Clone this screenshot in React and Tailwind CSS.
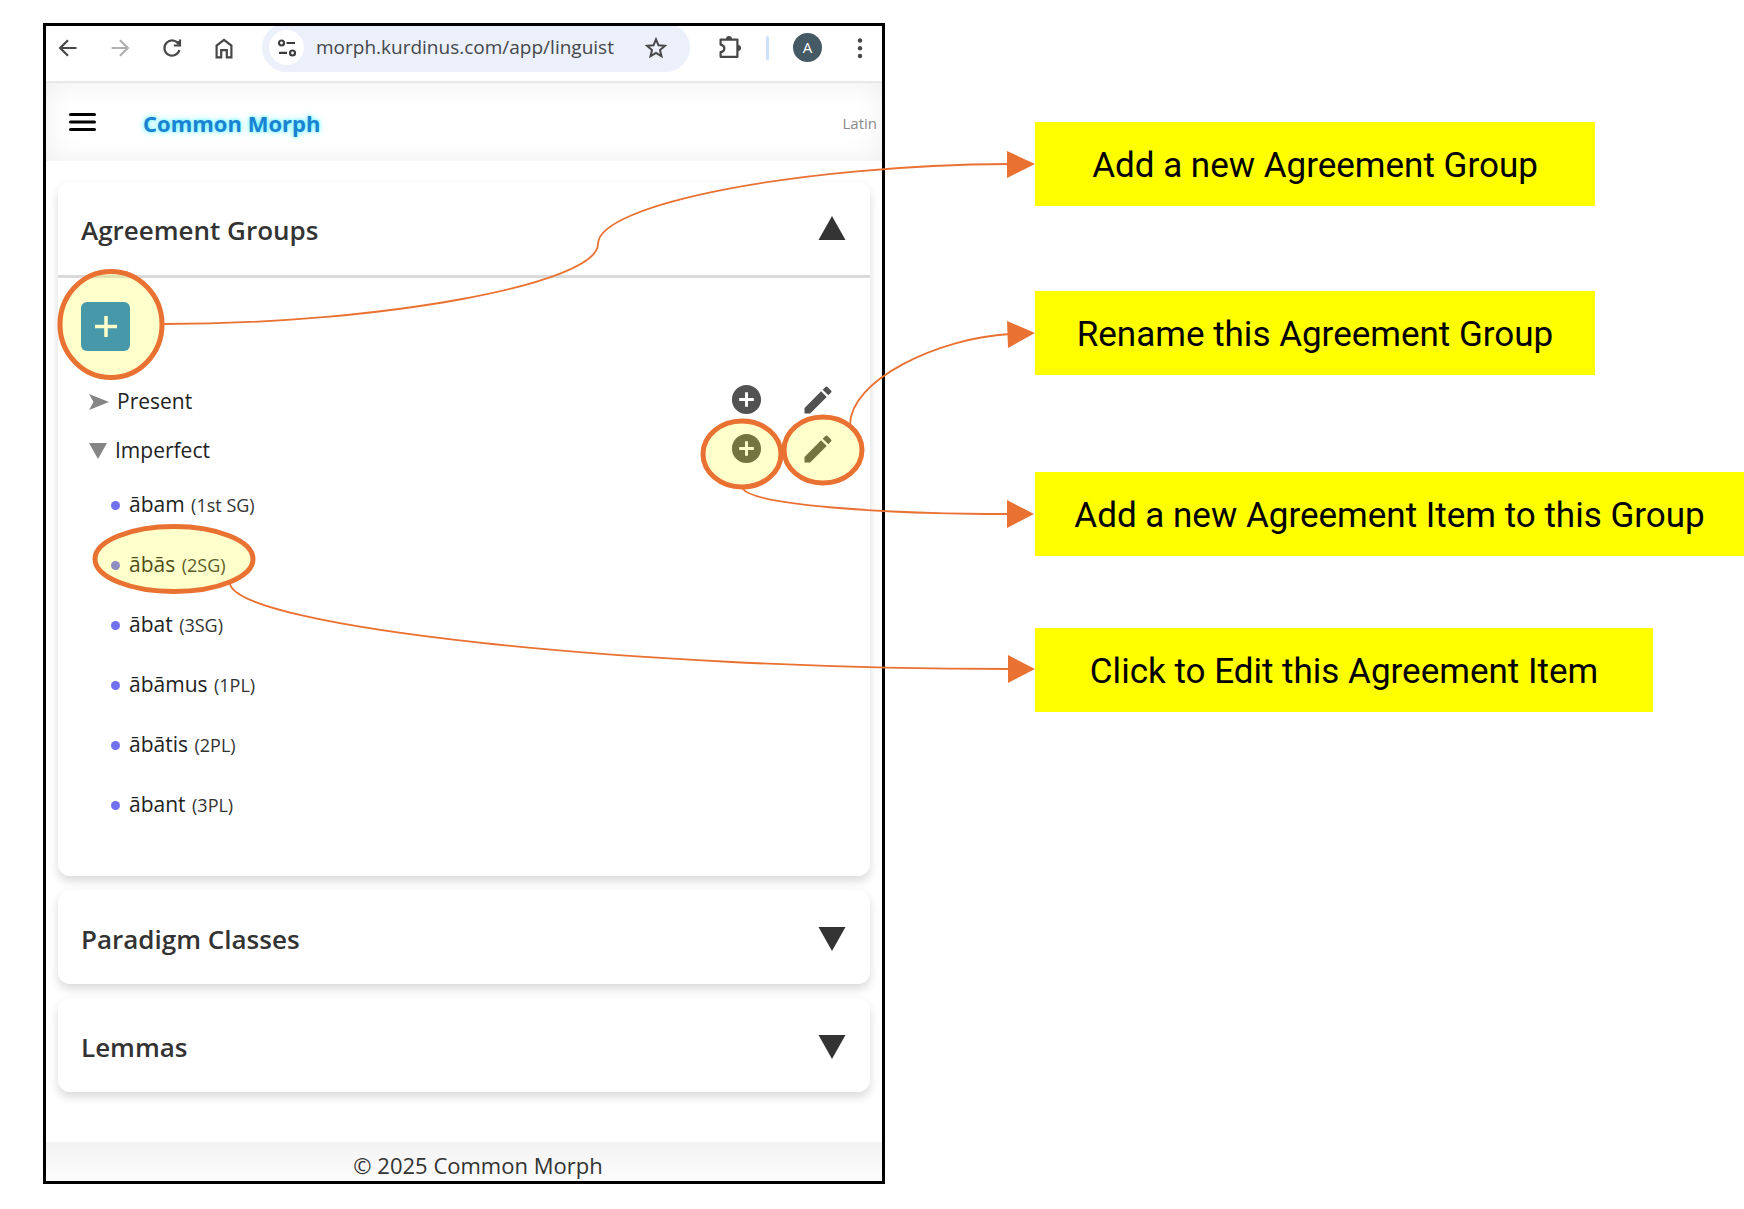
import React from "react";
import { MdAddCircle, MdEdit } from "react-icons/md";

const ITEMS = [
  ["ābam", "(1st SG)"],
  ["ābās", "(2SG)"],
  ["ābat", "(3SG)"],
  ["ābāmus", "(1PL)"],
  ["ābātis", "(2PL)"],
  ["ābant", "(3PL)"],
];

function NavButton({ label, className = "text-[#474747]", children }) {
  return (
    <button aria-label={label} className={`flex size-6 shrink-0 items-center justify-center ${className}`}>
      <svg viewBox="0 0 24 24" className="size-6" fill="none" stroke="currentColor" strokeWidth="2.2">
        {children}
      </svg>
    </button>
  );
}

function BrowserBar() {
  return (
    <div className="overflow-hidden border-b-2 border-[#e8e8e8] bg-white pb-[9px]">
      <div className="-mt-[3px] flex h-[49px] items-center pr-[10px] pl-[10px]">
        <div className="flex gap-7">
          <NavButton label="Back">
            <path d="M20.5 12H5M12 4.2 4.2 12l7.8 7.8" />
          </NavButton>
          <NavButton label="Forward" className="text-[#b0b0b0]">
            <path d="M3.5 12H19M12 4.2l7.8 7.8-7.8 7.8" />
          </NavButton>
          <NavButton label="Reload">
            <path d="M18.6 8.2A7.6 7.6 0 1 0 19.4 14" />
            <path d="M20 3.5v6h-6.2" />
            <path d="M18.6 8.5V5" />
          </NavButton>
          <NavButton label="Home">
            <path d="M4.6 21.4V9.6L12 3.8l7.4 5.8v11.8h-4.6v-7.2H9.2v7.2z" />
          </NavButton>
        </div>
        <div className="ml-[26px] flex h-full flex-1 items-center rounded-full bg-[#ebf0fa] pr-[22px] pl-[7px]">
          <button aria-label="Site information" className="flex size-[35px] shrink-0 items-center justify-center rounded-full bg-white text-[#3c3c3c]">
            <svg viewBox="0 0 24 24" className="size-6" fill="none" stroke="currentColor" strokeWidth="2.2">
              <circle cx="6.5" cy="7" r="2.5" />
              <path d="M11.5 7H20M4 16.8H12" />
              <circle cx="17.5" cy="17" r="2.5" />
            </svg>
          </button>
          <input
            aria-label="Address"
            defaultValue="morph.kurdinus.com/app/linguist"
            className="ml-3 min-w-0 flex-1 bg-transparent text-[19px] text-[#45474c] outline-none"
          />
          <button aria-label="Bookmark" className="text-[#474747]">
            <svg viewBox="0 0 24 24" className="size-6" fill="none" stroke="currentColor" strokeWidth="2">
              <path d="m12 3.4 2.5 5.9 6.400.5-4.900 4.200 1.500 6.200L12 16.900l-5.500 3.300L8 14 3.100 9.800l6.400-.5z" />
            </svg>
          </button>
        </div>
        <button aria-label="Extensions" className="ml-7 text-[#474747]">
          <svg viewBox="0 0 24 24" className="size-6" fill="none" stroke="currentColor" strokeWidth="2.2">
            <path d="M2.600 3.600h16.800v17.200H2.600v-4.600c5-1 5-6.600 0-7.600z" strokeLinejoin="round" />
            <path d="M8 3a3 3 0 0 1 6 0zM20 9a3 3 0 0 1 0 6z" fill="currentColor" stroke="none" />
          </svg>
        </button>
        <span className="ml-6 h-6 w-[3px] rounded bg-[#cbdffc]" />
        <button aria-label="Profile" className="ml-6 flex size-[29px] items-center justify-center rounded-full bg-[#455a64] text-[15px] font-medium text-white">
          A
        </button>
        <button aria-label="Browser menu" className="ml-[26px] text-[#474747]">
          <svg viewBox="0 0 24 24" className="size-6" fill="currentColor">
            <circle cx="12" cy="4.5" r="2.2" />
            <circle cx="12" cy="12.2" r="2.2" />
            <circle cx="12" cy="20" r="2.2" />
          </svg>
        </button>
      </div>
    </div>
  );
}

function Section({ title, open = false, children }) {
  return (
    <section className="rounded-xl bg-white shadow-[0_5px_10px_rgba(0,0,0,0.15)]">
      <h2>
        <button
          aria-expanded={open}
          className={`flex w-full items-center justify-between pt-1 pr-6 pl-[23px] text-[26px] font-semibold text-[#333] ${open ? "h-24 border-b-[3px] border-[#dadada]" : "h-[94px]"}`}
        >
          {title}
          <svg viewBox="0 0 28 24" className={`h-6 w-7 ${open ? "mb-1.5" : ""}`} fill="#333">
            {open ? <path d="M14 0 27.500 24H.5z" /> : <path d="M14 24 27.500 0H.5z" />}
          </svg>
        </button>
      </h2>
      {children}
    </section>
  );
}

function GroupRow({ name, open }) {
  return (
    <div className="flex h-[49px] items-center pr-[34px] pl-[31px]">
      <button aria-expanded={open} className="flex items-center gap-2 pt-1 text-[21px] text-[#222]">
        {open ? (
          <svg viewBox="0 0 18 16" className="h-4 w-[18px]" fill="#858585">
            <path d="M0 0h18L9 16z" />
          </svg>
        ) : (
          <svg viewBox="0 0 20 16" className="h-4 w-5" fill="#858585">
            <path d="M0 0 20 8 0 16 4.500 8z" />
          </svg>
        )}
        {name}
      </button>
      <button aria-label={`Add item to ${name}`} className="ml-auto text-[#525252]">
        <MdAddCircle size={35} />
      </button>
      <button aria-label={`Rename ${name}`} className="ml-9 text-[#525252]">
        <MdEdit size={36} />
      </button>
    </div>
  );
}

function AppWindow() {
  return (
    <div className="w-full max-w-[842px] shrink-0 border-[3px] border-black bg-white font-['Open_Sans','Noto_Sans',sans-serif]">
      <BrowserBar />
      <header className="flex h-[78px] items-center pr-[5px] pl-[23px] shadow-[inset_0_0_28px_rgba(0,0,0,0.07)]">
        <button aria-label="Menu" className="text-black">
          <svg viewBox="0 0 27 18" className="h-[18px] w-[27px]" fill="none" stroke="currentColor" strokeWidth="3" strokeLinecap="round">
            <path d="M1.500 1.500h24M1.500 9h24M1.500 16.500h24" />
          </svg>
        </button>
        <a href="#home" className="ml-[47px] pt-0.5 text-[22px] font-bold text-[#1b82d2] [text-shadow:0_0_6px_#5ef4ff,0_0_3px_#8ff8ff]">
          Common Morph
        </a>
        <span className="ml-auto pt-0.5 text-[15px] text-[#8b8b8b]">Latin</span>
      </header>
      <main className="flex flex-col gap-[14px] px-3 pt-[21px] pb-[50px]">
        <Section title="Agreement Groups" open>
          <div className="pt-6 pb-[41px]">
            <button aria-label="Add group" className="mb-6 ml-[23px] flex size-[49px] items-center justify-center rounded-md bg-[#197fd3] text-white">
              <svg viewBox="0 0 22 22" className="size-[22px]" stroke="currentColor" strokeWidth="3.5">
                <path d="M11 0v21M0 10.500h22" />
              </svg>
            </button>
            <GroupRow name="Present" open={false} />
            <GroupRow name="Imperfect" open />
            <ul className="pt-0.5">
              {ITEMS.map(([form, tag]) => (
                <li key={form} className="flex h-[60px] items-center pl-[53px]">
                  <span className="mr-[9px] size-[9px] rounded-full bg-[#7171f1]" />
                  <button className="text-[21px] text-[#222]">
                    {form} <span className="ml-px text-[18px] text-[#333]">{tag}</span>
                  </button>
                </li>
              ))}
            </ul>
          </div>
        </Section>
        <Section title="Paradigm Classes" />
        <Section title="Lemmas" />
      </main>
      <footer className="flex h-[39px] items-center justify-center bg-linear-to-b from-[#f3f3f3] to-[#fcfcfc] pt-2 pl-7 text-[22px] text-[#333]">
        © 2025 Common Morph
      </footer>
    </div>
  );
}

function Callout({ className, children }) {
  return (
    <p className={`flex h-[84px] items-center justify-center bg-[#ffff00] pt-1 text-[35px] whitespace-nowrap text-black ${className}`}>
      {children}
    </p>
  );
}

function Annotations() {
  return (
    <svg aria-hidden="true" viewBox="0 0 1744 1209" width="1744" height="1209" className="pointer-events-none absolute top-0 left-0 max-w-none" fill="none">
      <g stroke="#e97132" strokeWidth="5" fill="#ffff00" fillOpacity="0.2">
        <ellipse cx="111" cy="324.500" rx="51" ry="53" />
        <ellipse cx="742" cy="454" rx="39" ry="33" />
        <ellipse cx="823" cy="450" rx="39" ry="33" />
        <ellipse cx="174" cy="559" rx="79" ry="32.500" />
      </g>
      <g stroke="#e97132" strokeWidth="1.8">
        <path d="M164 324C381 324 598 284 598 244S800 165 1010 164" />
        <path d="M850 425C850 380 938 338 1010 334" />
        <path d="M743 489C755 505 880 514 1010 514" />
        <path d="M230 584C240 627 625 669 1010 669" />
      </g>
      <g fill="#e97132">
        <path d="M1007 151 1035 164 1007 178z" />
        <path d="M1007 321 1035 333 1008 348z" />
        <path d="M1007 500 1034 514 1007 528z" />
        <path d="M1008 655 1035 669 1008 683z" />
      </g>
    </svg>
  );
}

export default function App() {
  return (
    <div className="relative flex min-h-screen items-start overflow-hidden bg-white pt-[23px] pb-[25px] pl-[43px]">
      <AppWindow />
      <aside className="ml-[150px] flex flex-1 flex-col items-start pt-[99px] font-['Roboto',sans-serif]">
        <Callout className="mb-[85px] w-[560px]">Add a new Agreement Group</Callout>
        <Callout className="mb-[97px] w-[560px]">Rename this Agreement Group</Callout>
        <Callout className="mb-[72px] w-full">Add a new Agreement Item to this Group</Callout>
        <Callout className="w-[618px]">Click to Edit this Agreement Item</Callout>
      </aside>
      <Annotations />
    </div>
  );
}
